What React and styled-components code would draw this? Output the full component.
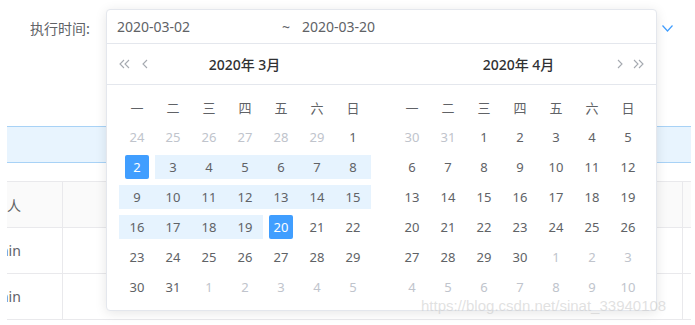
import React from "react";
import styled, { createGlobalStyle } from "styled-components";

const GlobalStyle = createGlobalStyle`
  html, body { margin: 0; padding: 0; background: #fff; }
  body { font-family: "Noto Sans", "Noto Sans CJK SC", sans-serif; color: #606266; }
  * { box-sizing: border-box; }
`;

const Page = styled.div`
  position: relative;
  width: 695px;
  height: 325px;
  overflow: hidden;
  padding-left: 7px;
`;

const FilterRow = styled.div`
  height: 56px;
  width: 684px;
  display: flex;
  align-items: center;
  padding-left: 23px;
  padding-right: 18px;
`;

const Label = styled.span`
  font-family: "Noto Sans CJK SC", sans-serif;
  font-size: 14px;
  color: #606266;
`;

const Chevron = styled.svg`
  margin-left: auto;
  display: block;
`;

const Band = styled.div`
  margin-top: 70px;
  width: 684px;
  height: 37px;
  background: #e8f4fe;
  border-top: 1px solid #a8d2f6;
  border-bottom: 1px solid #a8d2f6;
`;

const Table = styled.div`
  margin-top: 18px;
  width: 684px;
`;

const TRow = styled.div`
  display: grid;
  grid-template-columns: 56px 620px 8px;
  height: 46px;
  border-top: 1px solid #e9e9ec;
  background: ${(p) => (p.$head ? "#fafafa" : "#fff")};
`;

const TCell = styled.div`
  display: flex;
  align-items: center;
  overflow: hidden;
  white-space: nowrap;
  font-size: 14px;
  color: #606266;
  border-right: ${(p) => (p.$last ? "none" : "1px solid #e9e9ec")};
`;

const Clipped = styled.span`
  margin-left: ${(p) => p.$shift}px;
  font-family: "Noto Sans", "Noto Sans CJK SC", sans-serif;
`;

const Popup = styled.div`
  position: absolute;
  left: 106px;
  top: 9px;
  width: 551px;
  height: 302px;
  background: #fff;
  border: 1px solid #e4e7ed;
  border-radius: 4px;
  box-shadow: 0 2px 12px rgba(0, 0, 0, 0.1);
`;

const InputRow = styled.div`
  height: 34px;
  display: flex;
  align-items: center;
  padding-left: 10px;
  border-bottom: 1px solid #e4e7ed;
  font-size: 14px;
  color: #606266;
`;

const DateText = styled.span`
  width: ${(p) => p.$w}px;
`;

const Tilde = styled.span`
  width: 20px;
`;

const PanelsRow = styled.div`
  display: flex;
  gap: 23px;
  padding: 0 12px;
  border-bottom: ${(p) => (p.$head ? "1px solid #e4e7ed" : "none")};
  padding-top: ${(p) => (p.$head ? 0 : 7)}px;
`;

const Header = styled.div`
  width: 252px;
  height: 40px;
  display: grid;
  grid-template-columns: 1fr auto 1fr;
  align-items: center;
`;

const Arrows = styled.div`
  display: flex;
  align-items: center;
  gap: ${(p) => p.$gap}px;
  justify-self: ${(p) => (p.$end ? "end" : "start")};
`;

const Title = styled.div`
  font-family: "Noto Sans", "Noto Sans CJK SC", sans-serif;
  font-size: 14px;
  font-weight: 500;
  color: #303133;
`;

const Panel = styled.div`
  width: 252px;
  display: grid;
  grid-template-columns: repeat(7, 36px);
  grid-auto-rows: 30px;
`;

const Week = styled.div`
  display: flex;
  align-items: center;
  justify-content: center;
  font-family: "Noto Sans CJK SC", sans-serif;
  font-size: 13px;
  color: #606266;
`;

const Day = styled.div`
  display: flex;
  align-items: center;
  justify-content: center;
`;

const DayInner = styled.span`
  height: 24px;
  width: ${(p) => (p.$sel ? "24px" : "100%")};
  display: flex;
  align-items: center;
  justify-content: center;
  font-size: 13px;
  border-radius: ${(p) => (p.$sel ? "2px" : "0")};
  background: ${(p) => (p.$sel ? "#409eff" : p.$range ? "#e6f3fe" : "transparent")};
  color: ${(p) => (p.$sel ? "#fff" : p.$grey ? "#c0c4cc" : "#606266")};
`;

const Watermark = styled.div`
  position: absolute;
  left: 421px;
  top: 297px;
  font-family: "Liberation Sans", sans-serif;
  font-size: 15px;
  color: rgba(200, 200, 200, 0.55);
  white-space: nowrap;
`;

const ArrowIcon = ({ dir = "left", double = false }) => {
  const flip = dir === "right";
  const w = double ? 11 : 6;
  return (
    <svg width={w} height="10" viewBox={`0 0 ${w} 10`}>
      <g
        fill="none"
        stroke="#a5a9b0"
        strokeWidth="1.1"
        transform={flip ? `translate(${w},0) scale(-1,1)` : undefined}
      >
        <polyline points="5,1 1,5 5,9" />
        {double && <polyline points="10,1 6,5 10,9" />}
      </g>
    </svg>
  );
};

const weekdays = ["一", "二", "三", "四", "五", "六", "日"];

function buildMarch() {
  const cells = [];
  [24, 25, 26, 27, 28, 29].forEach((d) => cells.push({ d, grey: true }));
  for (let d = 1; d <= 31; d++) {
    cells.push({
      d,
      sel: d === 2 || d === 20,
      range: d > 2 && d < 20,
    });
  }
  [1, 2, 3, 4, 5].forEach((d) => cells.push({ d, grey: true }));
  return cells;
}

function buildApril() {
  const cells = [];
  [30, 31].forEach((d) => cells.push({ d, grey: true }));
  for (let d = 1; d <= 30; d++) cells.push({ d });
  [1, 2, 3, 4, 5, 6, 7, 8, 9, 10].forEach((d) => cells.push({ d, grey: true }));
  return cells;
}

const MonthPanel = ({ cells }) => (
  <Panel>
    {weekdays.map((w) => (
      <Week key={w}>{w}</Week>
    ))}
    {cells.map((c, i) => (
      <Day key={i}>
        <DayInner $sel={c.sel} $range={c.range} $grey={c.grey}>
          {c.d}
        </DayInner>
      </Day>
    ))}
  </Panel>
);

export default function App() {
  return (
    <>
      <GlobalStyle />
      <Page>
        <FilterRow>
          <Label>执行时间:</Label>
          <Chevron width="11" height="7" viewBox="0 0 11 7">
            <polyline points="0.5,0.5 5.5,6 10.5,0.5" fill="none" stroke="#409eff" strokeWidth="1.2" />
          </Chevron>
        </FilterRow>
        <Band />
        <Table>
          <TRow $head>
            <TCell>
              <Clipped $shift={-28}>负责人</Clipped>
            </TCell>
            <TCell />
            <TCell $last />
          </TRow>
          <TRow>
            <TCell>
              <Clipped $shift={-28}>admin</Clipped>
            </TCell>
            <TCell />
            <TCell $last />
          </TRow>
          <TRow>
            <TCell>
              <Clipped $shift={-28}>admin</Clipped>
            </TCell>
            <TCell />
            <TCell $last />
          </TRow>
          <TRow />
        </Table>

        <Popup>
          <InputRow>
            <DateText $w={165}>2020-03-02</DateText>
            <Tilde>~</Tilde>
            <DateText $w={120}>2020-03-20</DateText>
          </InputRow>
          <PanelsRow $head>
            <Header>
              <Arrows $gap={12}>
                <ArrowIcon dir="left" double />
                <ArrowIcon dir="left" />
              </Arrows>
              <Title>2020年 3月</Title>
              <span />
            </Header>
            <Header>
              <span />
              <Title>2020年 4月</Title>
              <Arrows $gap={10} $end>
                <ArrowIcon dir="right" />
                <ArrowIcon dir="right" double />
              </Arrows>
            </Header>
          </PanelsRow>
          <PanelsRow>
            <MonthPanel cells={buildMarch()} />
            <MonthPanel cells={buildApril()} />
          </PanelsRow>
        </Popup>
        <Watermark>https://blog.csdn.net/sinat_33940108</Watermark>
      </Page>
    </>
  );
}
